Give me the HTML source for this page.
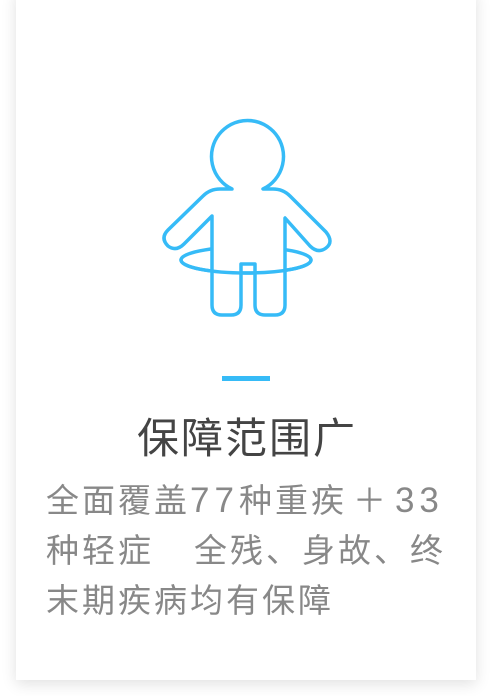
<!DOCTYPE html>
<html><head><meta charset="utf-8"><style>
html,body{margin:0;padding:0;background:#fff;}
body{width:492px;height:696px;position:relative;overflow:hidden;font-family:"Liberation Sans","Noto Sans CJK SC",sans-serif;}
.card{position:absolute;left:16px;top:-10px;width:460px;height:690px;background:#fff;box-shadow:0 4px 14px rgba(0,0,0,0.12);}
.dash{position:absolute;left:222px;top:376px;width:48px;height:5px;background:#36bbf7;}
.title{position:absolute;left:0;width:492px;top:412px;text-align:center;font-size:42px;line-height:54px;color:#444;letter-spacing:2px;text-indent:2px;}
.t{position:absolute;left:46px;font-size:33px;line-height:50px;color:#888;letter-spacing:3px;white-space:pre;}
.d{letter-spacing:5px;font-size:35px;}
</style></head><body>
<div class="card"></div>
<svg style="position:absolute;left:0;top:0" width="492" height="696">
<g fill="none" stroke="#36bbf7" stroke-width="3.5" stroke-linejoin="round" stroke-linecap="round">
<ellipse cx="246" cy="260" rx="65" ry="13"/>
<path fill="#fff" d="M232 189 A36 36 0 1 1 263 189 L273 189 Q283 189 290 196 L326 232 Q334 242 326 248 Q318 254 310 246 L285 218 L285 305 Q285 315 275 315 L265 315 Q255 315 255 305 L255 264 L241 264 L241 305 Q241 315 231 315 L222 315 Q212 315 212 305 L212 216 L184 244 Q176 252 168 246 Q160 238 168 230 L203 196 Q210 189 220 189 Z"/>
<path d="M181 260 A65 13 0 0 0 311 260"/>
</g>
</svg>
<div class="dash"></div>
<div class="title">保障范围广</div>
<div class="t" style="top:476px">全面覆盖<span class="d">77</span>种重疾<span style="margin:0 6px">＋</span><span class="d">33</span></div>
<div class="t" style="top:526px">种轻症<span style="display:inline-block;width:40px"></span>全残、身故、终</div>
<div class="t" style="top:576px">末期疾病均有保障</div>
</body></html>
